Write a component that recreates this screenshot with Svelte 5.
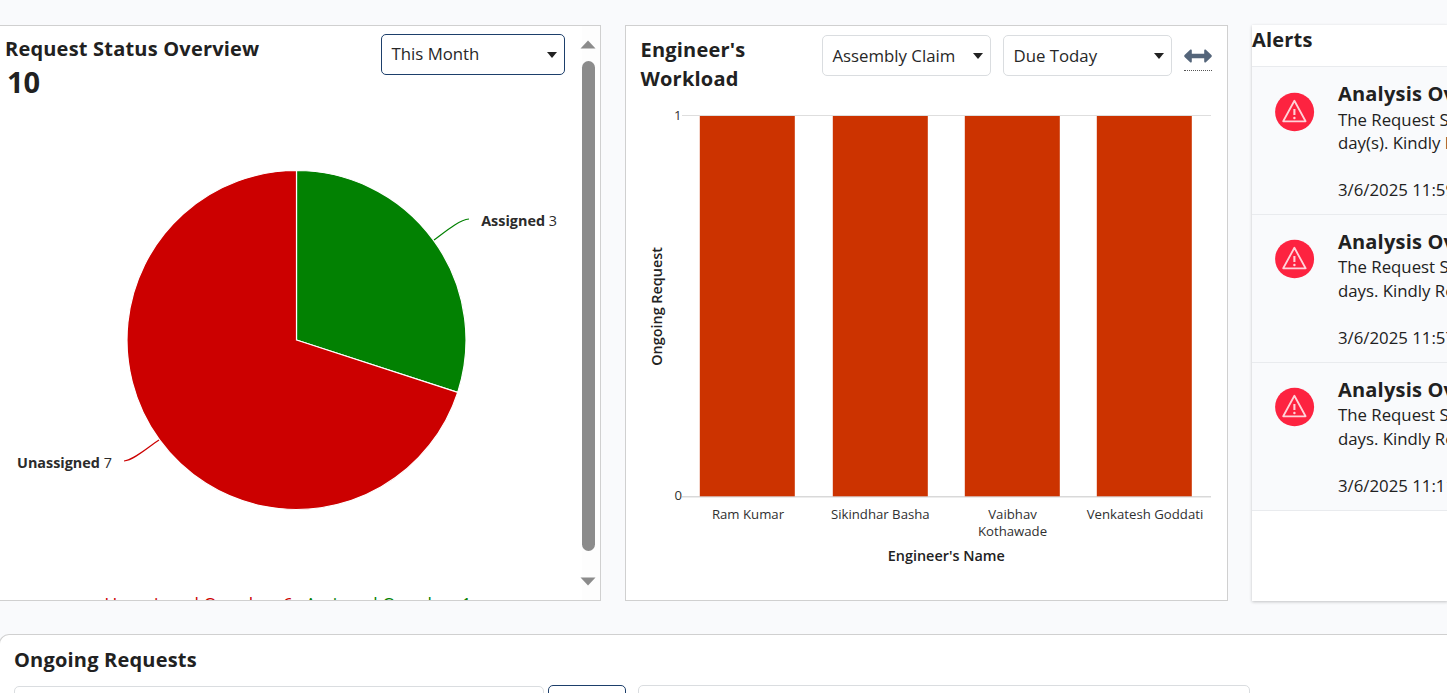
<script lang="ts">
    const slices = [
        {
            name: "Assigned",
            value: 3,
            color: "#028102",
            connector: "M434,240 C446,231 459,220 469,219",
            x: 481.2,
            y: 226,
        },
        {
            name: "Unassigned",
            value: 7,
            color: "#cc0000",
            connector: "M159,440 C147,448 134,460 124,461",
            x: 17,
            y: 468,
        },
    ];

    const total = slices.reduce((sum, s) => sum + s.value, 0);

    const cx = 296.5;
    const cy = 340;
    const radius = 169.5;

    function arc(index: number) {
        const before = slices.slice(0, index).reduce((sum, s) => sum + s.value, 0);
        const start = (before / total) * Math.PI * 2;
        const end = ((before + slices[index].value) / total) * Math.PI * 2;
        const x1 = cx + radius * Math.sin(start);
        const y1 = cy - radius * Math.cos(start);
        const x2 = cx + radius * Math.sin(end);
        const y2 = cy - radius * Math.cos(end);
        const large = end - start > Math.PI ? 1 : 0;
        return `M${cx},${cy} L${x1},${y1} A${radius},${radius} 0 ${large} 1 ${x2},${y2} Z`;
    }

    const engineers = [
        { lines: ["Ram Kumar"], x: 700, center: 748 },
        { lines: ["Sikindhar Basha"], x: 833, center: 880.3 },
        { lines: ["Vaibhav", "Kothawade"], x: 965, center: 1012.5 },
        { lines: ["Venkatesh Goddati"], x: 1097, center: 1145 },
    ];

    const alerts = [
        { unit: "day(s)", time: "3/6/2025 11:59" },
        { unit: "days", time: "3/6/2025 11:57" },
        { unit: "days", time: "3/6/2025 11:11" },
    ];
</script>

<div class="page">
    <div class="widgets">
        <section class="card status">
            <div class="status-body">
                <header class="status-header">
                    <div>
                        <h2>Request Status Overview</h2>
                        <div class="count">{total}</div>
                    </div>
                    <button class="select active">
                        <span>This Month</span>
                        <i class="caret"></i>
                    </button>
                </header>

                <svg class="pie" viewBox="0 110 582 482">
                    {#each slices as slice, i}
                        <path d={arc(i)} fill={slice.color} stroke="#fff" stroke-width="1.2" />
                        <path d={slice.connector} fill="none" stroke={slice.color} stroke-width="1.2" />
                        <text x={slice.x} y={slice.y}>
                            <tspan font-weight="700">{slice.name}</tspan> {slice.value}
                        </text>
                    {/each}
                </svg>

                <div class="overdue">
                    <span class="red">Unassigned Overdue: 6</span>
                    <span class="green">Assigned Overdue: 1</span>
                </div>
            </div>

            <div class="scrollbar">
                <svg width="16" height="9" viewBox="0 0 16 9"><path d="M8 0.5 L15.5 8.5 H0.5 Z" fill="#8b8b8b" /></svg>
                <div class="thumb"></div>
                <svg width="16" height="9" viewBox="0 0 16 9"><path d="M8 8.5 L15.5 0.5 H0.5 Z" fill="#8b8b8b" /></svg>
            </div>
        </section>

        <section class="card workload">
            <header class="workload-header">
                <h2>Engineer's Workload</h2>
                <button class="select">
                    <span>Assembly Claim</span>
                    <i class="caret"></i>
                </button>
                <button class="select">
                    <span>Due Today</span>
                    <i class="caret"></i>
                </button>
                <span class="expand">
                    <svg width="28" height="14" viewBox="0 0 28 14">
                        <path
                            d="M6.4 0.6 L0.6 5.9 Q-0.2 7 0.6 8.1 L6.4 13.4 Q7.8 13.9 7.8 12.5 V9.2 H20.2 V12.5 Q20.2 13.9 21.6 13.4 L27.4 8.1 Q28.2 7 27.4 5.9 L21.6 0.6 Q20.2 0.1 20.2 1.5 V4.8 H7.8 V1.5 Q7.8 0.1 6.4 0.6 Z"
                            fill="#54657a"
                        />
                    </svg>
                </span>
            </header>

            <svg class="bars" viewBox="626 96 601 504">
                <path d="M682 115.5 H1211" stroke="#dedede" />
                <path d="M682 496.7 H1211" stroke="#d9d9d9" stroke-width="1.6" />
                <text x="681.5" y="120" text-anchor="end">1</text>
                <text x="682" y="500" text-anchor="end">0</text>
                {#each engineers as engineer}
                    <rect x={engineer.x - 0.2} y="116" width="95" height="380.3" fill="#cc3300" />
                    {#each engineer.lines as line, i}
                        <text x={engineer.center} y={519 + i * 17} text-anchor="middle">{line}</text>
                    {/each}
                {/each}
                <text class="axis" x="946.3" y="561" text-anchor="middle">Engineer's Name</text>
                <text class="axis" transform="translate(662 306.4) rotate(-90)" text-anchor="middle">Ongoing Request</text>
            </svg>
        </section>

        <section class="alerts">
            <h2>Alerts</h2>
            {#each alerts as alert}
                <article class="alert">
                    <svg class="alert-icon" width="40" height="40" viewBox="0 0 40 40">
                        <ellipse cx="19.6" cy="20" rx="19.5" ry="19.3" fill="#fd2340" />
                        <path d="M19.4 8.8 L30.6 29.3 H8.2 Z" fill="none" stroke="#ffd3d9" stroke-width="1.8" stroke-linejoin="round" />
                        <path d="M19.4 17 V23" stroke="#ffd3d9" stroke-width="2.1" />
                        <circle cx="19.4" cy="26" r="1.2" fill="#ffd3d9" />
                    </svg>
                    <div>
                        <h3>Analysis Overdue</h3>
                        <p>The Request Status<br />{alert.unit}. Kindly Review</p>
                        <time>{alert.time}</time>
                    </div>
                </article>
            {/each}
        </section>
    </div>

    <section class="ongoing">
        <h2>Ongoing Requests</h2>
        <div class="filters">
            <div class="field search"></div>
            <div class="field action"></div>
            <div class="field wide"></div>
        </div>
    </section>
</div>

<style>
    :global(body) {
        margin: 0;
        overflow: hidden;
    }

    .page {
        box-sizing: border-box;
        width: 1447px;
        height: 693px;
        padding-top: 25px;
        overflow: hidden;
        background: #f9fafc;
        color: #212121;
        font-family: "Open Sans", sans-serif;
        font-size: 16px;
    }

    h2,
    h3,
    p {
        margin: 0;
    }

    h2 {
        font-size: 20px;
        line-height: 29px;
        font-weight: 700;
        letter-spacing: 0.2px;
    }

    .widgets {
        display: grid;
        grid-template-columns: 601px 603px 196px;
        column-gap: 24px;
        height: 577px;
    }

    .card {
        box-sizing: border-box;
        height: 576px;
        border: 1px solid #d0d0d0;
        background: #fff;
        overflow: hidden;
    }

    .select {
        display: flex;
        align-items: center;
        justify-content: space-between;
        box-sizing: border-box;
        height: 41px;
        padding: 0 7.5px 0 9.5px;
        border: 1px solid #dadde0;
        border-radius: 5px;
        background: #fff;
        color: #272727;
        font: 16.8px "Open Sans", sans-serif;
        white-space: nowrap;
    }

    .select.active {
        width: 184px;
        padding-bottom: 2px;
        border-color: #1d3f6b;
    }

    .select.active .caret {
        margin-top: 2px;
    }

    .caret {
        width: 0;
        border: 5.5px solid transparent;
        border-top: 6px solid #222;
        border-bottom: 0;
    }

    /* Request status */
    .status {
        display: flex;
        border-left: 0;
    }

    .status-body {
        width: 582px;
        flex: none;
    }

    .status-header {
        display: flex;
        justify-content: space-between;
        box-sizing: border-box;
        height: 84px;
        padding: 8px 17px 0 5px;
    }

    .count {
        padding-left: 2px;
        font-size: 29px;
        line-height: 38px;
        font-weight: 700;
    }

    .pie {
        display: block;
        width: 582px;
        height: 482px;
    }

    .pie text {
        font-size: 14.4px;
        fill: #2b2b2b;
    }

    .overdue {
        display: flex;
        gap: 12.5px;
        padding-left: 104.5px;
        font-size: 17.4px;
        line-height: 24px;
        white-space: nowrap;
    }

    .red {
        color: #cc0000;
    }

    .green {
        color: #028102;
    }

    .scrollbar {
        display: flex;
        flex-direction: column;
        align-items: center;
        gap: 12px;
        width: 18px;
        padding: 14px 0;
        box-sizing: border-box;
        background: #fdfdfd;
    }

    .scrollbar svg {
        margin-right: 5.5px;
    }

    .thumb {
        width: 13px;
        height: 490px;
        margin-right: 5px;
        border-radius: 7px;
        background: #8b8b8b;
    }

    .scrollbar svg:last-child {
        margin-top: 14px;
    }

    /* Workload */
    .workload-header {
        display: grid;
        grid-template-columns: 169px 169px 169px 28px;
        column-gap: 12px;
        box-sizing: border-box;
        height: 70px;
        padding: 9px 0 0 15px;
    }

    .workload-header h2 {
        width: 120px;
        margin-left: -0.5px;
    }

    .expand {
        height: 21px;
        padding-top: 14px;
        border-bottom: 1px dotted #555;
    }

    .expand svg {
        display: block;
        margin-top: -0.5px;
    }

    .bars {
        display: block;
        width: 601px;
        height: 504px;
    }

    .bars text {
        font-size: 13.2px;
        fill: #303030;
    }

    .bars .axis {
        font-size: 14.4px;
        font-weight: 600;
        fill: #222;
    }

    /* Alerts */
    .alerts {
        height: 576px;
        background: #fff;
        box-shadow: 0 1px 3px rgba(0, 0, 0, 0.22);
        white-space: nowrap;
    }

    .alerts h2 {
        height: 41px;
        border-bottom: 1px solid #e9ebee;
    }

    .alert {
        display: flex;
        gap: 23px;
        box-sizing: border-box;
        height: 148px;
        padding: 12px 0 0 23px;
        border-bottom: 1px solid #e9ebee;
        background: #f9fafc;
    }

    .alert-icon {
        flex: none;
        margin-top: 13px;
    }

    .alert + .alert .alert-icon {
        margin-top: 12px;
    }

    h3 {
        font-size: 20px;
        line-height: 29px;
        letter-spacing: 0.2px;
    }

    .alert p {
        font-size: 16.8px;
        line-height: 23.4px;
    }

    .alert + .alert p {
        margin-top: -1px;
        line-height: 24px;
    }

    .alert time {
        display: block;
        margin-top: 23px;
        font-size: 16.8px;
        line-height: 24px;
    }

    /* Ongoing requests */
    .ongoing {
        margin-top: 32px;
        padding: 10px 14px 0;
        height: 100px;
        border-top: 1px solid #d0d0d0;
        border-left: 1px solid #d0d0d0;
        border-radius: 10px 0 0 0;
        margin-left: -1px;
        background: #fff;
    }

    .filters {
        display: flex;
        align-items: flex-start;
        padding-top: 11px;
    }

    .field {
        box-sizing: border-box;
        height: 40px;
        border: 1px solid #dadde0;
        border-radius: 5px;
    }

    .search {
        width: 530px;
        margin-top: 1px;
    }

    .action {
        width: 78px;
        margin: 0 12px 0 4px;
        border-color: #1d3f6b;
    }

    .wide {
        width: 612px;
    }
</style>
